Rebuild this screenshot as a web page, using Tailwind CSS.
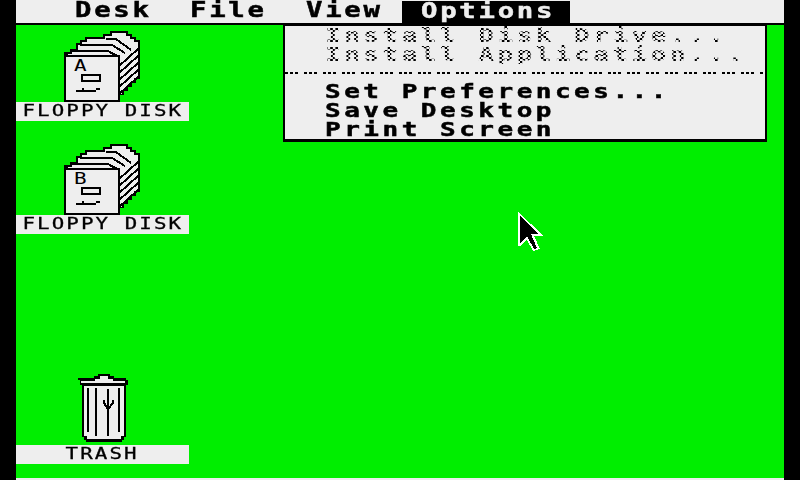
<!DOCTYPE html>
<html lang="en">
<head>
    <meta charset="UTF-8">
    <title>GEM Desktop</title>
    <script src="https://cdn.jsdelivr.net/npm/@tailwindcss/browser@4"></script>
</head>
<body class="bg-black overflow-hidden">
    <div class="w-[800px] h-[480px] flex bg-black font-['DejaVu_Sans_Mono',monospace] font-bold text-black">
        <div class="w-4 bg-black"></div>
        <div class="w-[768px] flex flex-col">
            <!-- Menu bar -->
            <div class="h-[23px] bg-[#eeeeee] flex text-[21px] leading-[21px] tracking-[2.1px] [-webkit-text-stroke:0.5px_currentColor]">
                <div class="ml-[59px] w-[115px]"><span class="inline-block origin-left scale-x-[1.3]">Desk</span></div>
                <div class="w-[116px]"><span class="inline-block origin-left scale-x-[1.3]">File</span></div>
                <div class="w-[96px]"><span class="inline-block origin-left scale-x-[1.3]">View</span></div>
                <div class="mt-[1px] w-[168px] bg-black text-[#eeeeee] pl-[19px]"><span class="inline-block origin-left scale-x-[1.3] -mt-[1px]">Options</span></div>
            </div>
            <div class="h-[2px] bg-black"></div>

            <!-- Desktop -->
            <div class="relative flex-1 bg-[#00ee00] border-b-2 border-[#eeeeee]">
                <!-- Floppy A -->
                <div class="absolute left-0 top-[3px] w-[173px]">
                    <svg class="block ml-[44px]" width="85" height="74" viewBox="60 28 85 74" shape-rendering="crispEdges">
                        <path d="M64 55V52H70V49H76V43H80V40H85V37H103V34H110V31H128V34H132V37H136V40H140V79H136V83H132V87H128V91H124V95H120V102H64Z" fill="#000"/>
                        <path d="M68 56V54H72V51H78V45H82V42H87V39H105V36H112V33H126V36H130V39H134V42H138V78H134V82H130V86H126V90H122V94H119V56Z" fill="#eee"/>
                        <path d="M72 51H108L119 57M80 45H112L125 53M106 39H116L131 50M119 66L138 49M119 73L138 56M119 80L138 63M119 87L138 70M119 94L138 77" fill="none" stroke="#000" stroke-width="2"/>
                        <rect x="64" y="55" width="56" height="47" fill="#000"/>
                        <rect x="66" y="57" width="52" height="43" fill="#eee"/>
                        <text transform="translate(74 71) scale(1.4 1)" font-size="15" font-family="DejaVu Sans Mono" font-weight="400" fill="#000">A</text>
                        <path fill-rule="evenodd" d="M81 74H101V82H81ZM83 76V80H99V76Z" fill="#000"/>
                        <path d="M76 90H82V88H84V90H96V88H100V90H96V92H76Z" fill="#000"/>
                    </svg>
                    <div class="h-[19px] bg-[#eeeeee] flex justify-center text-[16px] leading-[17px] tracking-[1.6px] font-normal [-webkit-text-stroke:0.3px_#000]"><span class="inline-block scale-x-[1.3] whitespace-pre">FLOPPY DISK</span></div>
                </div>

                <!-- Floppy B -->
                <div class="absolute left-0 top-[116px] w-[173px]">
                    <svg class="block ml-[44px]" width="85" height="74" viewBox="60 28 85 74" shape-rendering="crispEdges">
                        <path d="M64 55V52H70V49H76V43H80V40H85V37H103V34H110V31H128V34H132V37H136V40H140V79H136V83H132V87H128V91H124V95H120V102H64Z" fill="#000"/>
                        <path d="M68 56V54H72V51H78V45H82V42H87V39H105V36H112V33H126V36H130V39H134V42H138V78H134V82H130V86H126V90H122V94H119V56Z" fill="#eee"/>
                        <path d="M72 51H108L119 57M80 45H112L125 53M106 39H116L131 50M119 66L138 49M119 73L138 56M119 80L138 63M119 87L138 70M119 94L138 77" fill="none" stroke="#000" stroke-width="2"/>
                        <rect x="64" y="55" width="56" height="47" fill="#000"/>
                        <rect x="66" y="57" width="52" height="43" fill="#eee"/>
                        <text transform="translate(74 71) scale(1.4 1)" font-size="15" font-family="DejaVu Sans Mono" font-weight="400" fill="#000">B</text>
                        <path fill-rule="evenodd" d="M81 74H101V82H81ZM83 76V80H99V76Z" fill="#000"/>
                        <path d="M76 90H82V88H84V90H96V88H100V90H96V92H76Z" fill="#000"/>
                    </svg>
                    <div class="h-[19px] bg-[#eeeeee] flex justify-center text-[16px] leading-[17px] tracking-[1.6px] font-normal [-webkit-text-stroke:0.3px_#000]"><span class="inline-block scale-x-[1.3] whitespace-pre">FLOPPY DISK</span></div>
                </div>

                <!-- Trash -->
                <div class="absolute left-0 top-[348px] w-[173px]">
                    <svg class="block ml-[60px]" width="52" height="72" viewBox="76 373 52 72" shape-rendering="crispEdges">
                        <path d="M98 374H110V376H114V378H126V380H128V385H126V437H124V440H122V442H86V440H84V437H82V385H80V380H78V378H94V376H98Z" fill="#000"/>
                        <path d="M100 376H108V379H113V381H125V383H81V381H95V379H100Z" fill="#eee"/>
                        <path d="M84 386H124V436H121V439H87V436H84Z" fill="#eee"/>
                        <path d="M88 388V432M96 388V436M108 389V436M119 388V432M104 400V403L108 409L113 403V400" fill="none" stroke="#000" stroke-width="2"/>
                    </svg>
                    <div class="h-[19px] bg-[#eeeeee] flex justify-center text-[16px] leading-[17px] tracking-[1.6px] font-normal [-webkit-text-stroke:0.3px_#000]"><span class="inline-block scale-x-[1.3]">TRASH</span></div>
                </div>

                <!-- Options dropdown -->
                <div class="absolute left-[267px] -top-px w-[484px] h-[118px] overflow-hidden bg-[#eeeeee] border-2 border-b-[3px] border-black pl-[40px] text-[20px] leading-[19px] tracking-[2.7px]">
                    <div class="h-[19px]"><span class="inline-block origin-left scale-x-[1.3] whitespace-pre text-transparent bg-clip-text bg-[repeating-conic-gradient(#000_0%_25%,#eeeeee_0%_50%)] bg-[length:4px_4px]">Install Disk Drive...</span></div>
                    <div class="h-[19px]"><span class="inline-block origin-left scale-x-[1.3] whitespace-pre text-transparent bg-clip-text bg-[repeating-conic-gradient(#000_0%_25%,#eeeeee_0%_50%)] bg-[length:4px_4px]">Install Application...</span></div>
                    <div class="ml-[-40px] mr-[2px] mt-[8px] h-[2px] bg-[repeating-linear-gradient(90deg,#000_0px,#000_3px,#eeeeee_3px,#eeeeee_5px,#000_5px,#000_8px,#eeeeee_8px,#eeeeee_10px,#000_10px,#000_13px,#eeeeee_13px,#eeeeee_19px)]"></div>
                    <div class="mt-[8px] h-[19px] [-webkit-text-stroke:0.5px_#000]"><span class="inline-block origin-left scale-x-[1.3] whitespace-pre">Set Preferences...</span></div>
                    <div class="h-[19px] [-webkit-text-stroke:0.5px_#000]"><span class="inline-block origin-left scale-x-[1.3] whitespace-pre">Save Desktop</span></div>
                    <div class="h-[19px] [-webkit-text-stroke:0.5px_#000]"><span class="inline-block origin-left scale-x-[1.3] whitespace-pre">Print Screen</span></div>
                </div>

                <!-- Mouse pointer -->
                <svg class="absolute left-[501px] top-[186px]" width="28" height="40" viewBox="517 211 28 40" shape-rendering="crispEdges">
                    <path d="M518 212L544 236H534L540 249L533 251L527 240L520 246H518Z" fill="#fff"/>
                    <path d="M520 216L539 234H531L537 248L534 249L527 236L520 243Z" fill="#000"/>
                </svg>
            </div>
        </div>
        <div class="w-4 bg-black"></div>
    </div>
</body>
</html>
